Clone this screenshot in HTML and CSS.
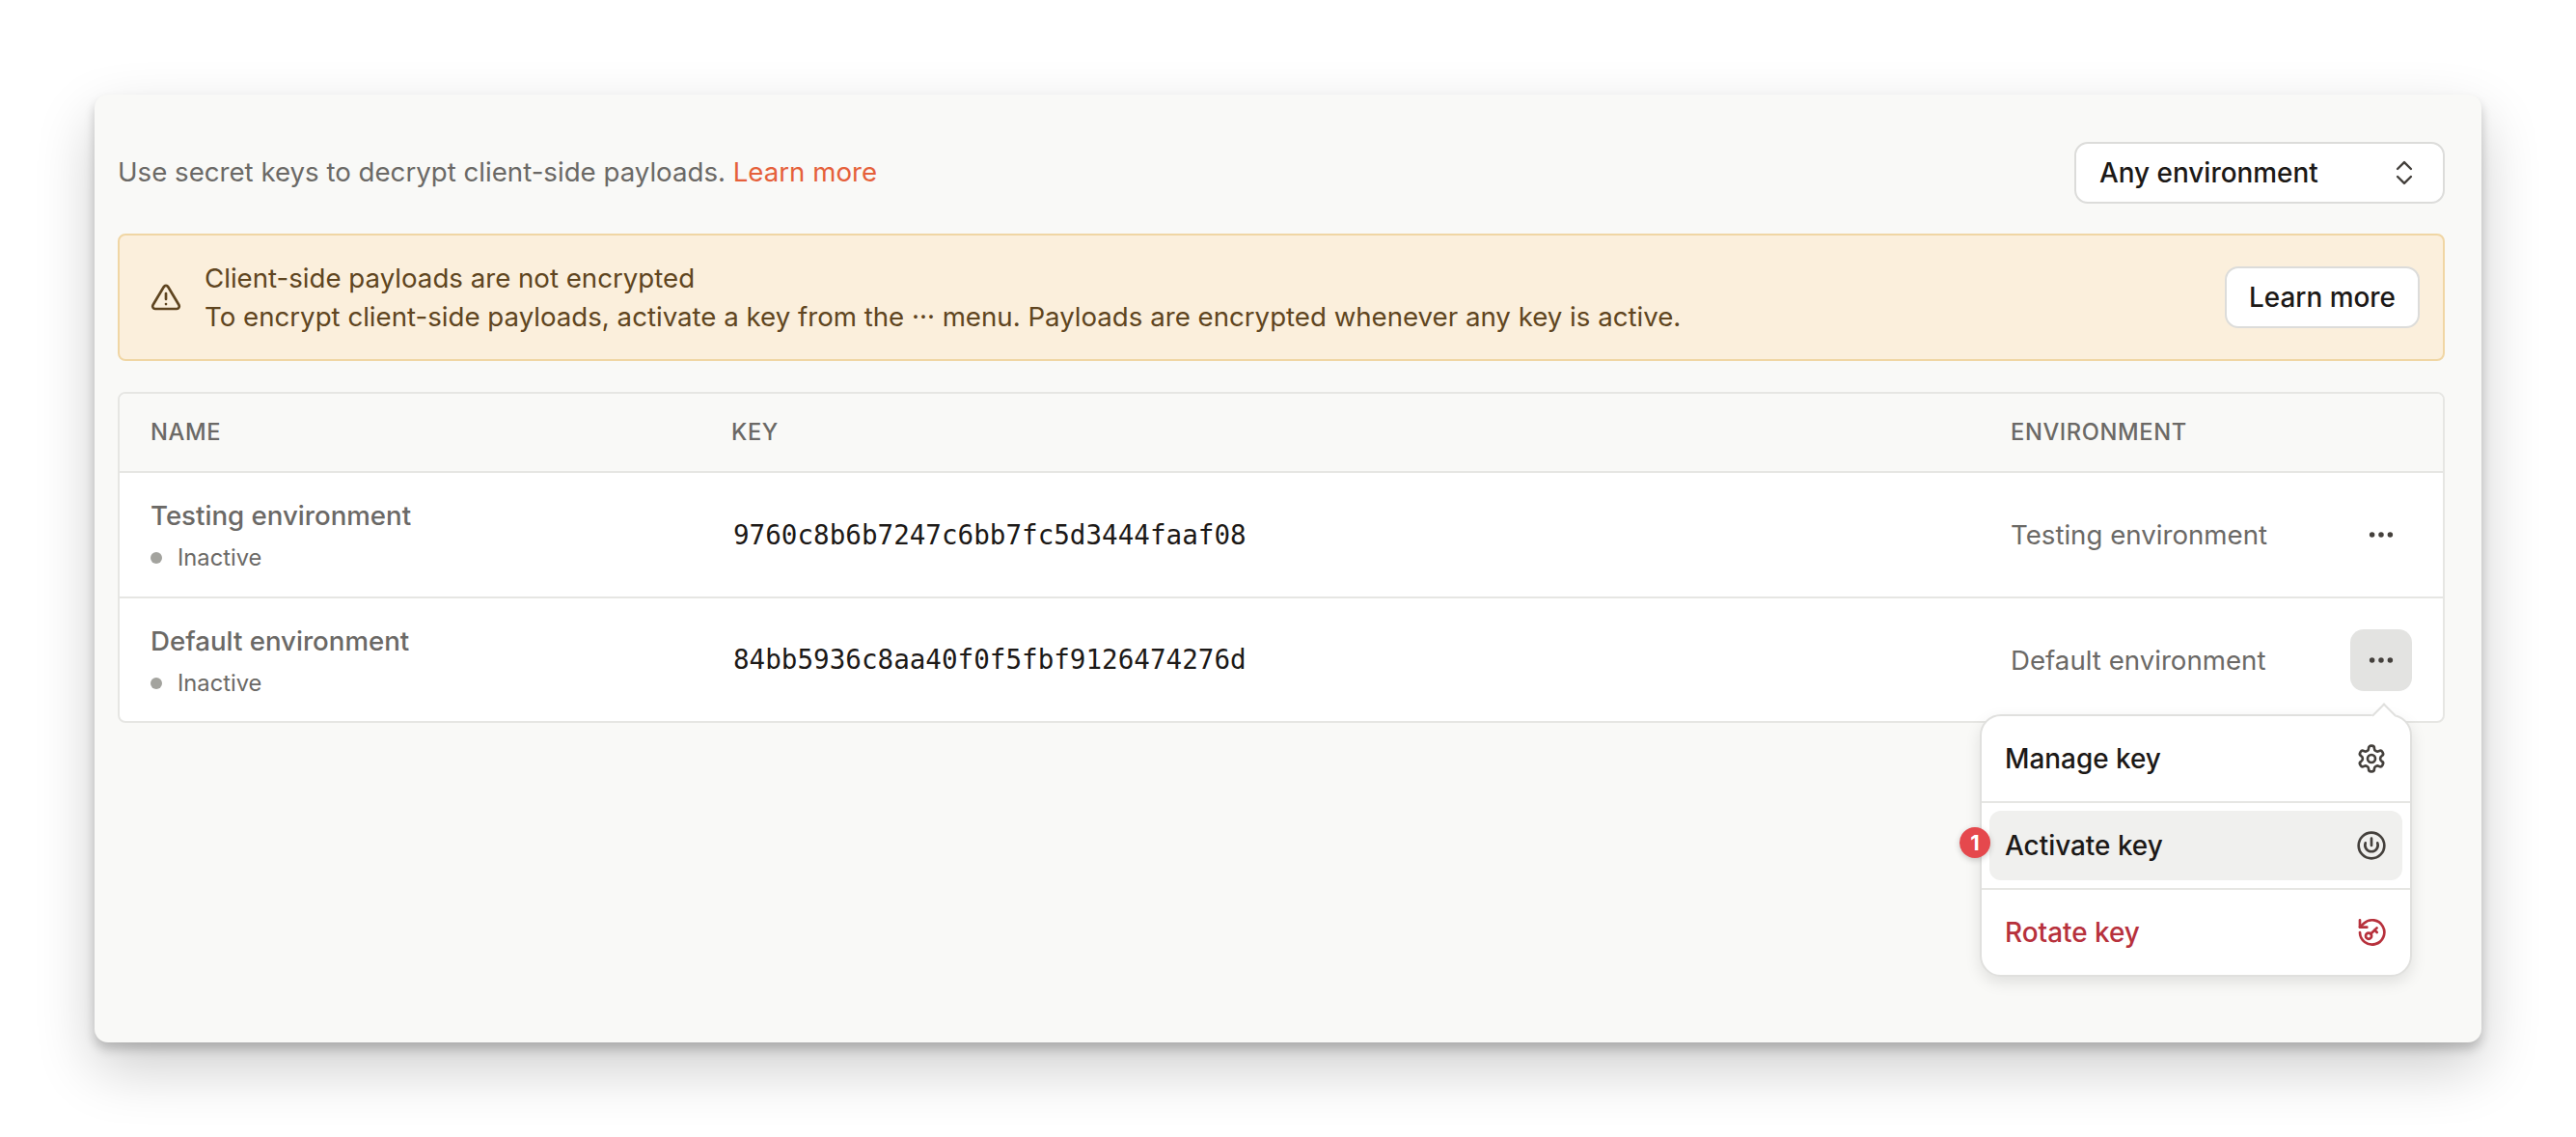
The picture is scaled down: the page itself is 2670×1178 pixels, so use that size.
FILE: index.html
```html
<!DOCTYPE html>
<html lang="en">
<head>
<meta charset="utf-8">
<title>Secret keys</title>
<link rel="stylesheet" href="styles.css">
</head>
<body>
<main class="panel">
  <header class="topbar">
    <p class="intro">Use secret keys to decrypt client-side payloads. <a class="link" href="#">Learn more</a></p>
    <button class="select" type="button">
      <span>Any environment</span>
      <svg class="sel-icon" viewBox="0 0 24 24" fill="none" stroke="#44403c" stroke-width="1.800" stroke-linecap="round" stroke-linejoin="round"><path d="M6.800 9 12 3.800 17.200 9"/><path d="M6.800 15 12 20.200 17.200 15"/></svg>
    </button>
  </header>
  <section class="alert">
    <svg class="alert-icon" viewBox="0 0 24 24" fill="none" stroke="#5f4520" stroke-width="2" stroke-linecap="round" stroke-linejoin="round"><path d="M10.300 3.900 1.900 18a2 2 0 0 0 1.700 3h16.800a2 2 0 0 0 1.700-3L13.700 3.900a2 2 0 0 0-3.400 0Z"/><path d="M12 9v4.500"/><path d="M12 17.300h.01"/></svg>
    <div class="alert-text">
      <div>Client-side payloads are not encrypted</div>
      <div>To encrypt client-side payloads, activate a key from the ··· menu. Payloads are encrypted whenever any key is active.</div>
    </div>
    <button class="btn" type="button">Learn more</button>
  </section>
  <section class="table">
    <div class="row head">
      <div>NAME</div><div class="key-h">KEY</div><div>ENVIRONMENT</div><div></div>
    </div>
    <div class="row">
      <div class="name"><div class="title">Testing environment</div><div class="status"><i class="dot"></i>Inactive</div></div>
      <div class="key">9760c8b6b7247c6bb7fc5d3444faaf08</div>
      <div class="env">Testing environment</div>
      <div class="act"><button class="more" type="button" aria-label="More"><svg viewBox="0 0 24 24" fill="#44403c"><circle cx="4.500" cy="12" r="2.200"/><circle cx="12" cy="12" r="2.200"/><circle cx="19.500" cy="12" r="2.200"/></svg></button></div>
    </div>
    <div class="row">
      <div class="name"><div class="title">Default environment</div><div class="status"><i class="dot"></i>Inactive</div></div>
      <div class="key">84bb5936c8aa40f0f5fbf9126474276d</div>
      <div class="env">Default environment</div>
      <div class="act"><button class="more open" type="button" aria-label="More"><svg viewBox="0 0 24 24" fill="#44403c"><circle cx="4.500" cy="12" r="2.200"/><circle cx="12" cy="12" r="2.200"/><circle cx="19.500" cy="12" r="2.200"/></svg></button>
        <div class="menu">
          <i class="caret"></i>
          <div class="mi"><span>Manage key</span>
            <svg viewBox="0 0 24 24" fill="none" stroke="#44403c" stroke-width="2" stroke-linecap="round" stroke-linejoin="round"><path d="M12.220 2h-.440a2 2 0 0 0-2 2v.180a2 2 0 0 1-1 1.730l-.430.250a2 2 0 0 1-2 0l-.150-.080a2 2 0 0 0-2.730.730l-.220.380a2 2 0 0 0 .730 2.730l.150.100a2 2 0 0 1 1 1.720v.510a2 2 0 0 1-1 1.740l-.150.090a2 2 0 0 0-.730 2.730l.220.380a2 2 0 0 0 2.730.730l.150-.080a2 2 0 0 1 2 0l.430.250a2 2 0 0 1 1 1.730V20a2 2 0 0 0 2 2h.440a2 2 0 0 0 2-2v-.180a2 2 0 0 1 1-1.730l.430-.250a2 2 0 0 1 2 0l.150.080a2 2 0 0 0 2.730-.730l.220-.390a2 2 0 0 0-.730-2.730l-.150-.080a2 2 0 0 1-1-1.740v-.500a2 2 0 0 1 1-1.740l.150-.090a2 2 0 0 0 .730-2.730l-.220-.380a2 2 0 0 0-2.730-.730l-.150.080a2 2 0 0 1-2 0l-.430-.250a2 2 0 0 1-1-1.730V4a2 2 0 0 0-2-2Z"/><circle cx="12" cy="12" r="3"/></svg>
          </div>
          <div class="mi hot"><b class="badge">1</b><span>Activate key</span>
            <svg viewBox="0 0 24 24" fill="none" stroke="#44403c" stroke-width="2" stroke-linecap="round" stroke-linejoin="round"><circle cx="12" cy="12" r="10"/><path d="M12 6.500V12"/><path d="M7.300 10a5 5 0 1 0 9.400 0"/></svg>
          </div>
          <div class="mi danger"><span>Rotate key</span>
            <svg viewBox="0 0 24 24" fill="none" stroke="#b7313c" stroke-width="2" stroke-linecap="round" stroke-linejoin="round"><path d="M3 12a9.500 9.500 0 1 0 3-7l-3 2.800"/><path d="M3 2.500v5.500h5.500"/><circle cx="9.800" cy="14.800" r="2.300"/><path d="m11.500 13.100 4.700-4.600"/><path d="m14.500 10.200 1.800 1.800"/></svg>
          </div>
        </div>
      </div>
    </div>
  </section>
</main>
</body>
</html>
```
FILE: styles.css
```css
* { box-sizing: border-box; }
html, body { margin: 0; height: 100%; }
body {
  background: #fff;
  padding: 98px 98px 0;
  font-family: Inter, "Liberation Sans", sans-serif;
  font-size: 27.650px;
  color: #1c1917;
  overflow: hidden;
}
button { font: inherit; color: #1c1917; cursor: pointer; }
.panel {
  width: 2474px;
  height: 982px;
  background: #f9f9f7;
  border-radius: 14px;
  padding: 49px 38px 0 24px;
  box-shadow: 0 7px 11px rgba(0,0,0,.2), 0 26px 62px rgba(0,0,0,.2);
}
.topbar { display: flex; align-items: center; justify-content: space-between; height: 64px; }
.intro { margin: 0 0 2px; color: #6b6966; }
.link { color: #e5603a; text-decoration: none; }
.select {
  width: 384px; height: 64px;
  display: flex; align-items: center; justify-content: space-between;
  padding: 0 24px;
  background: #fff;
  border: 2px solid #dcdcda;
  border-radius: 14px;
  text-align: left;
  font-size: 27.900px;
  font-weight: 450;
}
.sel-icon { width: 32px; height: 32px; }
.alert {
  margin-top: 31px;
  height: 132px;
  display: flex; align-items: center;
  padding: 0 24px 0 32px;
  background: #fbefdc;
  border: 2px solid #f0d6a4;
  border-radius: 8px;
  color: #5f4520;
}
.alert-icon { width: 32px; height: 32px; flex: none; margin-right: 24px; }
.alert-text { flex: 1; line-height: 40px; }
.btn {
  width: 202px; height: 64px;
  background: #fff;
  border: 2px solid #dcdcda;
  border-radius: 14px;
  padding: 0;
  font-size: 27.900px;
  font-weight: 450;
}
.table {
  margin-top: 32px;
  background: #fff;
  border: 2px solid #e6e6e3;
  border-radius: 8px;
}
.row {
  display: grid;
  grid-template-columns: 602px 1326px 1fr 64px;
  align-items: center;
  height: 130px;
  padding: 0 32px 0 32px;
  border-top: 2px solid #e6e6e3;
  color: #6b6966;
}
.row:last-child { height: 129px; }
.row.head {
  height: 80px;
  padding-bottom: 1px;
  border-top: 0;
  background: #f9f9f7;
  border-radius: 6px 6px 0 0;
  font-size: 23.700px;
  font-weight: 500;
  letter-spacing: .6px;
  color: #6b6966;
}
.name { padding-top: 2px; }
.title { line-height: 40px; font-weight: 450; }
.status { display: flex; align-items: center; gap: 16px; font-size: 23.700px; line-height: 36px; margin-top: 6px; }
.dot { width: 12px; height: 12px; border-radius: 50%; background: #a3a39e; }
.key {
  font-family: "DejaVu Sans Mono", "Liberation Mono", monospace;
  font-size: 27.600px;
  color: #1c1917;
  padding-left: 2px;
}
.act { position: relative; height: 64px; }
.more {
  width: 64px; height: 64px;
  display: flex; align-items: center; justify-content: center;
  padding: 0; background: transparent; border: 0; border-radius: 14px;
}
.more svg { width: 30px; height: 30px; }
.more.open { background: #e3e3e1; }
.menu {
  position: absolute;
  top: 88px; right: 0;
  width: 448px; height: 272px;
  padding-top: 1px;
  background: #fff;
  border: 2px solid #e0e0de;
  border-radius: 22px;
  box-shadow: 0 6px 16px rgba(0,0,0,.1);
  color: #1c1917;
  font-size: 27.900px;
  font-weight: 450;
  display: flex; flex-direction: column;
  z-index: 2;
}
.caret {
  position: absolute;
  top: -10px; right: 18px;
  width: 18px; height: 18px;
  background: #fff;
  border-top: 2px solid #e0e0de;
  border-left: 2px solid #e0e0de;
  transform: rotate(45deg);
}
.mi {
  position: relative;
  flex: 1;
  display: flex; align-items: center; justify-content: space-between;
  padding: 0 24px;
}
.mi svg { width: 32px; height: 32px; }
.mi + .mi { border-top: 2px solid #e6e6e3; }
.mi.hot::before {
  content: "";
  position: absolute;
  inset: 8px;
  background: #f0f0ee;
  border-radius: 12px;
}
.mi.hot > * { position: relative; }
.danger { color: #b7313c; }
.badge {
  position: absolute !important;
  left: -23px; top: calc(50% - 3px);
  transform: translateY(-50%);
  width: 32px; height: 32px;
  border-radius: 50%;
  background: #e5484d;
  color: #fff;
  font-size: 22px; font-weight: 700;
  display: flex; align-items: center; justify-content: center;
  box-shadow: 0 2px 6px rgba(0,0,0,.2);
  z-index: 1;
}
```
